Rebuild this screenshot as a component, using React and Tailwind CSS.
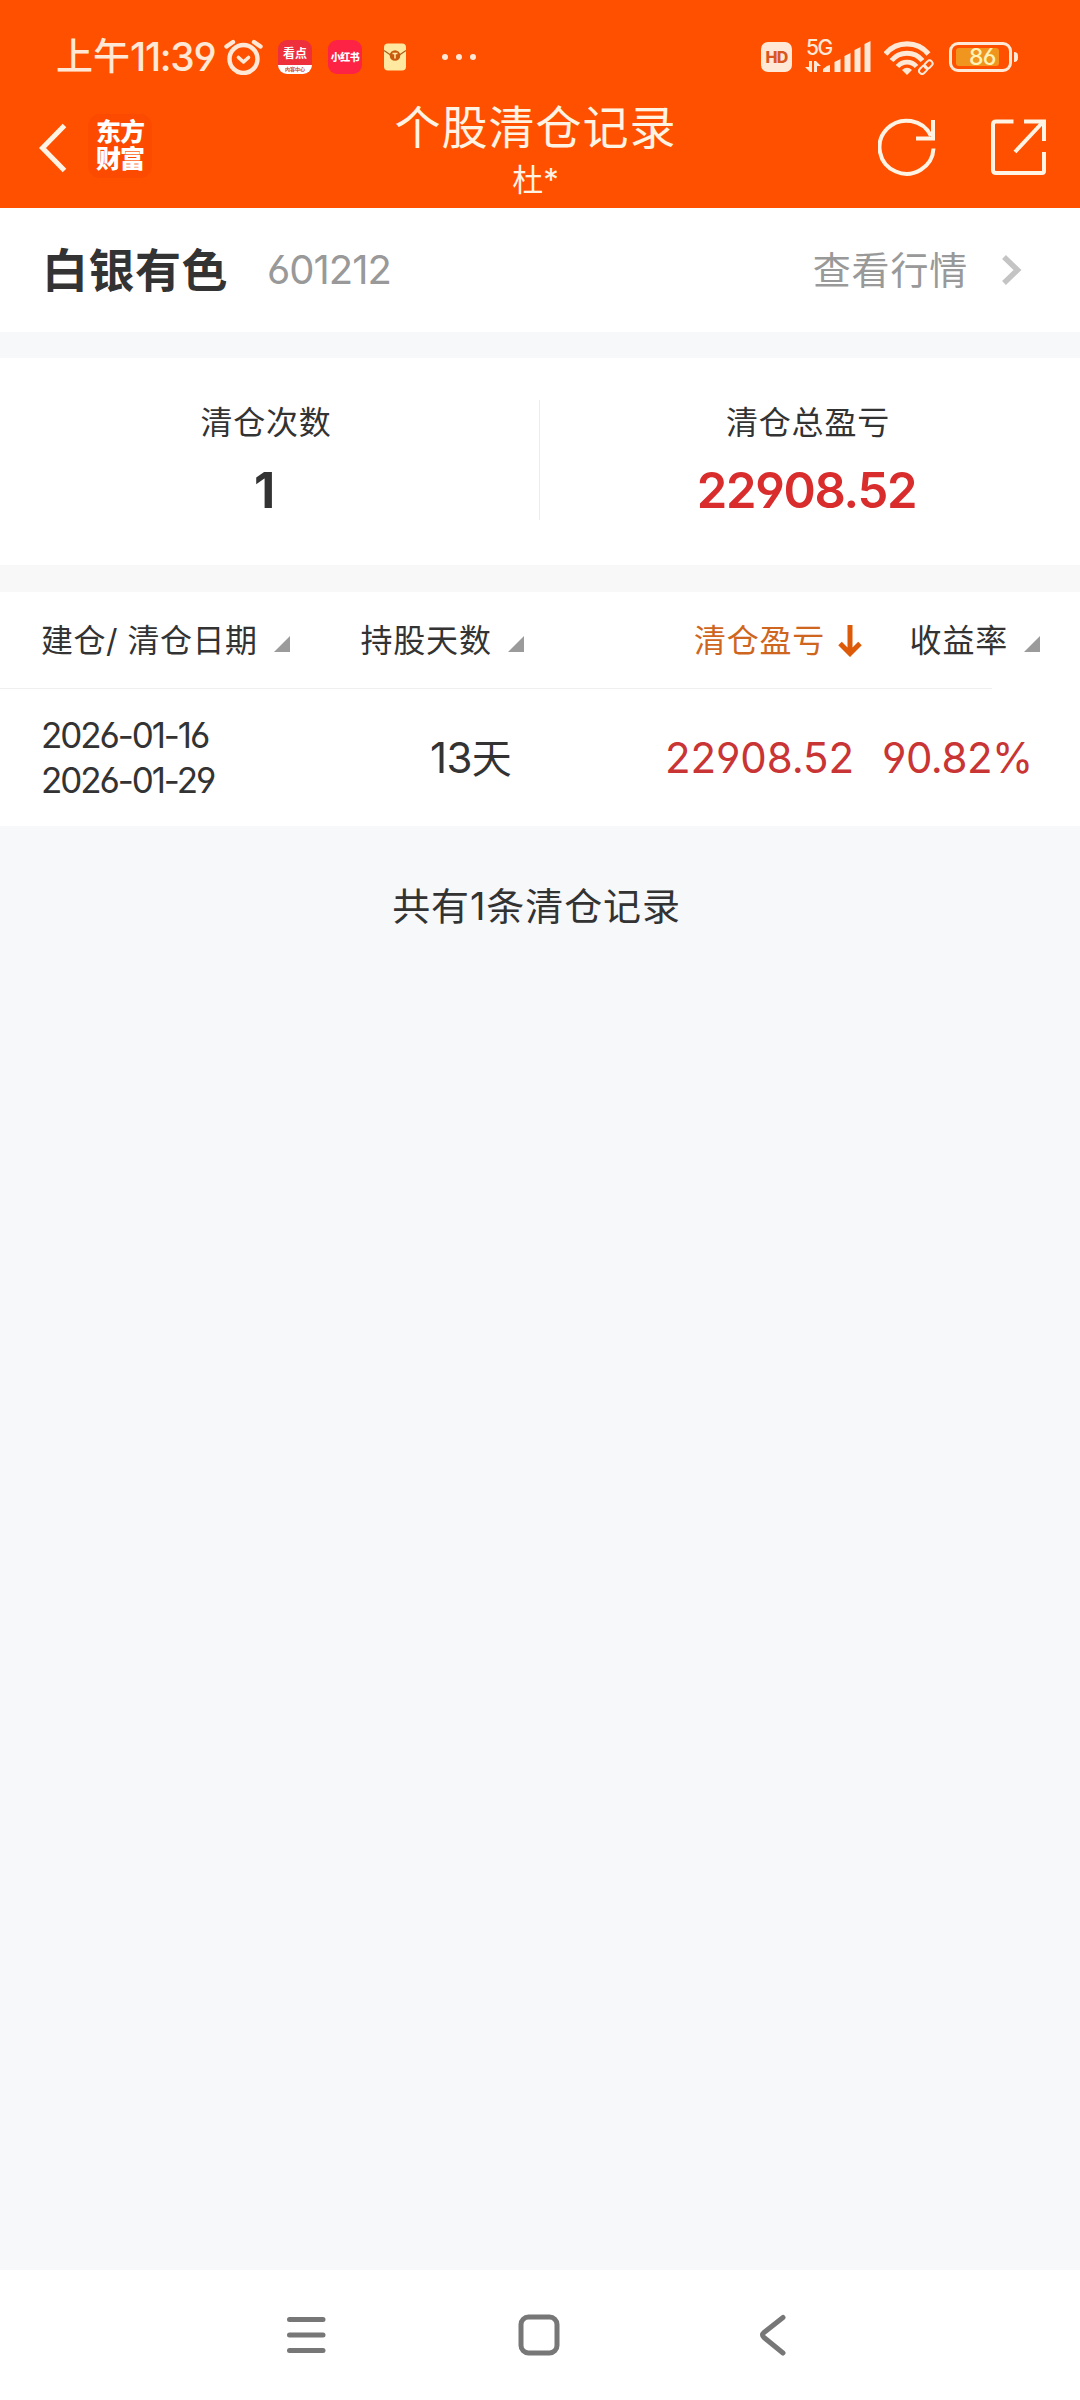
const records = [
  {
    opened: '2026-01-16',
    closed: '2026-01-29',
    days: 13,
    profit: '22908.52',
    rate: '90.82%',
  },
];

const SortMark = () => (
  <svg viewBox="0 0 16 16" className="ml-4 mt-1.5 w-4 h-4 shrink-0">
    <path d="M16 0V16H0Z" fill="#9b9b9b" />
  </svg>
);

const StatusBar = () => (
  <div className="h-[104px] pl-[56px] pr-[62px] pt-[37px] flex items-start justify-between text-[#ffe8d6]">
    <div className="flex items-center h-10">
      <span className="flex items-center w-[167px] whitespace-nowrap leading-10">
        <span className="text-[37px] font-medium">上午</span>
        <span className="text-[39px] font-medium tracking-[-1.3px]">11:39</span>
      </span>

      {/* alarm */}
      <svg viewBox="0 0 40 36" className="w-10 h-9 shrink-0" fill="none" stroke="currentColor" strokeWidth="4.4" strokeLinecap="round" strokeLinejoin="round">
        <circle cx="20.5" cy="20" r="14" />
        <path d="M3.5 7.5 10 3M31 3l6.5 4.5" />
        <path d="M15.5 18.5l5 4.5 5-4.5" strokeWidth="3.6" />
      </svg>

      <div className="ml-[15px] w-[34px] h-[34px] shrink-0 rounded-[9px] overflow-hidden bg-[#ee2f3c] flex flex-col">
        <span className="h-[25px] pt-[3px] text-center text-[12px] leading-[22px] font-bold text-white">看点</span>
        <span className="flex-1 bg-white text-center text-[5px] leading-[8px] font-bold text-[#c2453c]">内容中心</span>
      </div>

      <div className="ml-4 w-[34px] h-[34px] shrink-0 rounded-[9px] bg-[#fd2345] flex items-center justify-center text-[10px] font-black text-white tracking-[-0.5px]">
        小红书
      </div>

      <svg viewBox="0 0 24 28" className="ml-[21px] w-6 h-7 shrink-0">
        <rect x="1" y="0.5" width="22" height="27" rx="4" fill="#ffe9a0" />
        <path d="M1 7.5 12 15l11-7.5" fill="none" stroke="#a8621c" strokeWidth="1.3" />
        <circle cx="12" cy="12.5" r="5.3" fill="#c85a10" />
        <path d="M9.5 10.5h5M12 10.5v5" stroke="#ffe9a0" strokeWidth="1.5" />
      </svg>

      <div className="ml-[35px] flex gap-2">
        <i className="w-1.5 h-1.5 rounded-full bg-current" />
        <i className="w-1.5 h-1.5 rounded-full bg-current" />
        <i className="w-1.5 h-1.5 rounded-full bg-current" />
      </div>
    </div>

    <div className="flex items-center h-10">
      <div className="w-[31px] h-[30px] rounded-[7px] bg-current flex items-center justify-center">
        <span className="text-[16px] font-extrabold tracking-[-0.8px] text-[#d9561f]">HD</span>
      </div>

      {/* mobile signal */}
      <div className="ml-3 w-[68px] h-[34px] relative">
        <span className="absolute left-0.5 -top-px text-[21px] leading-[18px] font-medium tracking-[-1.5px]">5G</span>
        <svg viewBox="0 0 68 34" className="w-[68px] h-[34px]" fill="currentColor">
          <path d="M5 21h3v11H6L1 27h4zM10 32V21h2l5 5h-4v6z" />
          <path d="M19 32v-3l4-3 3-1v7zM30.5 32V22l6-3v13zM40.5 32V16l6-3v19zM50.5 32V10l6-3v25zM60.5 32V4l6-3v31z" />
        </svg>
      </div>

      {/* wifi */}
      <svg viewBox="0 0 50 36" className="ml-3 w-[50px] h-9" fill="none" stroke="currentColor">
        <path d="M1.500 15a28 28 0 0 1 43 0" strokeWidth="5.2" />
        <path d="M7.5 21.500a20 20 0 0 1 31 0" strokeWidth="5" />
        <path d="M13.5 27.500a12.500 12.500 0 0 1 19 0" strokeWidth="4.8" />
        <path d="M18 31q5-4.500 10 0L23 36z" fill="currentColor" stroke="none" />
        <g strokeWidth="2" transform="rotate(-45 42 28)">
          <rect x="33.5" y="25" width="9" height="6" rx="3" />
          <rect x="41" y="25" width="9" height="6" rx="3" />
        </g>
      </svg>

      {/* battery */}
      <div className="ml-[15px] flex items-center gap-0.5">
        <div className="w-[63px] h-[30px] p-[3px] rounded-[9px] border-[3px] border-current">
          <div className="w-[43px] h-[18px] ml-px rounded-[3px] bg-[#f0961e] flex items-center justify-end pr-[3px]">
            <span className="text-[23px] leading-[18px] font-medium tracking-[-0.5px] text-[#fff3b8]">86</span>
          </div>
        </div>
        <i className="w-1 h-2.5 rounded-r-sm bg-current" />
      </div>
    </div>
  </div>
);

const TitleBar = () => (
  <div className="h-[104px] grid grid-cols-[1fr_auto_1fr] text-[#fff3e4]">
    <div className="flex items-start pl-[38px]">
      <svg viewBox="0 0 30 52" className="mt-[18px] w-[30px] h-[52px]" fill="none" stroke="currentColor" strokeWidth="5">
        <path d="M26.5 3.5 4.5 26l22 22.5" />
      </svg>
      <div className="ml-5 mt-2.5 w-16 h-16 rounded-xl bg-[#fc4a00] flex flex-col items-center justify-center text-[25px] leading-[27px] font-black text-white tracking-[-1px]">
        <span>东方</span>
        <span>财富</span>
      </div>
    </div>

    <div className="flex flex-col items-center pr-[9px]">
      <h1 className="text-[46px] leading-[46px] tracking-[1px]">个股清仓记录</h1>
      <p className="mt-[14px] text-[31px] leading-[32px]">杜*</p>
    </div>

    <div className="flex items-start justify-end gap-[54px] pt-[14px] pr-[34px]">
      <svg viewBox="0 0 58 58" className="w-[58px] h-[58px]" fill="none" stroke="currentColor" strokeWidth="4">
        <path d="M55.5 30.5A27 26.5 0 1 1 53 18" />
        <path d="M55 2v18.5H38" />
      </svg>
      <svg viewBox="0 0 56 58" className="w-14 h-[58px]" fill="none" stroke="currentColor" strokeWidth="4">
        <path d="M23.5 3.5H6q-3 0-3 3V52q0 3 3 3h46q2 0 2-2V34" />
        <path d="M34 3.5h20V23M53 4 25 34" />
      </svg>
    </div>
  </div>
);

const App = () => {
  return (
    <div className="w-[1080px] h-[2400px] flex flex-col bg-[#f7f8fa] text-[#333] font-['Inter','Noto_Sans_CJK_SC',sans-serif] [font-feature-settings:'cv03','cv04']">
      <header className="h-[208px] bg-[#ff5000]">
        <StatusBar />
        <TitleBar />
      </header>

      <section className="h-[124px] pl-[42px] pr-[57px] flex items-center bg-white">
        <h2 className="text-[46px] leading-[62px] font-bold tracking-[0.5px]">白银有色</h2>
        <span className="ml-[39px] text-[40px] text-[#999] tracking-[-1px]">601212</span>
        <span className="ml-auto text-[38px] text-[#999] tracking-[0.8px]">查看行情</span>
        <svg viewBox="0 0 22 32" className="ml-[33px] w-[22px] h-8" fill="none" stroke="#c4c4c4" strokeWidth="5.5">
          <path d="M3 3l13.5 13L3 29" />
        </svg>
      </section>

      {/* SUMMARY */}
      <section className="mt-[26px] h-[207px] grid grid-cols-2 bg-white text-center">
        <div className="pt-[43px] pr-[8px] relative">
          <p className="text-[32px] leading-[44px] tracking-[0.8px]">清仓次数</p>
          <p className="mt-4 pr-[3px] text-[49px] leading-[60px] font-bold">1</p>
          <i className="absolute right-0 top-[42px] w-px h-[120px] bg-[#ececec]" />
        </div>
        <div className="pt-[43px] pr-[4px]">
          <p className="text-[32px] leading-[44px] tracking-[0.8px]">清仓总盈亏</p>
          <p className="mt-4 pr-[3px] text-[49px] leading-[60px] font-semibold text-[#d92c2c] tracking-[-1.3px]">22908.52</p>
        </div>
      </section>

      <div className="h-[27px] bg-[#f8f8f8]" />

      {/* RECORDS */}
      <section className="h-[234px] bg-white">
        <div className="h-24 pt-0.5 pl-[41px] pr-[40px] flex items-center text-[32px] tracking-[0.8px] whitespace-nowrap">
          <div className="w-[320px] flex items-center">
            <span className="tracking-[0.5px]">建仓/ 清仓日期</span>
            <SortMark />
          </div>
          <div className="w-[334px] flex items-center">
            <span>持股天数</span>
            <SortMark />
          </div>
          <div className="w-[216px] flex items-center text-[#cf6620]">
            <span>清仓盈亏</span>
            <svg viewBox="0 0 24 32" className="ml-[13px] w-6 h-8" fill="none" stroke="#dd5a08" strokeWidth="5">
              <path d="M12 0v28M2 18.5l10 10 10-10" />
            </svg>
          </div>
          <div className="flex items-center">
            <span>收益率</span>
            <SortMark />
          </div>
        </div>
        <div className="w-[992px] h-px bg-[#efefef]" />

        {records.map((item) => (
          <div key={item.opened} className="h-[137px] pl-[41px] flex items-center whitespace-nowrap">
            <div className="w-[389px] text-[35px] leading-[45px] tracking-[-2.1px]">
              <p>{item.opened}</p>
              <p>{item.closed}</p>
            </div>
            <div className="w-[235px] text-[40px]">
              <span className="text-[42px] tracking-[-0.7px]">{item.days}</span>天
            </div>
            <div className="w-[217px] text-[42px] text-[#c93434] tracking-[-0.1px]">{item.profit}</div>
            <div className="text-[42px] text-[#c93434] tracking-[-0.5px]">{item.rate}</div>
          </div>
        ))}
      </section>

      <p className="mt-[53px] pr-[7px] text-center text-[38px] leading-[54px] tracking-[0.9px]">共有{records.length}条清仓记录</p>

      <nav className="mt-auto h-[130px] flex bg-white text-[#777]">
        <svg viewBox="0 0 40 42" className="ml-[286px] mt-[44px] w-10 h-[42px]" stroke="currentColor" strokeWidth="5" strokeLinecap="round">
          <path d="M3.5 5.5h33.5M3.5 21h33.5M3.5 36.5h33.5" />
        </svg>
        <svg viewBox="0 0 42 42" className="ml-[192px] mt-[44px] w-[42px] h-[42px]" fill="none" stroke="currentColor" strokeWidth="5">
          <rect x="3" y="3" width="36" height="36" rx="7.5" />
        </svg>
        <svg viewBox="0 0 28 42" className="ml-[199px] mt-[44px] w-7 h-[42px]" fill="none" stroke="currentColor" strokeWidth="5" strokeLinecap="round">
          <path d="M24 3.5 5 18.5q-3 2.5 0 5L24 39" />
        </svg>
      </nav>
    </div>
  );
};

export default App;
